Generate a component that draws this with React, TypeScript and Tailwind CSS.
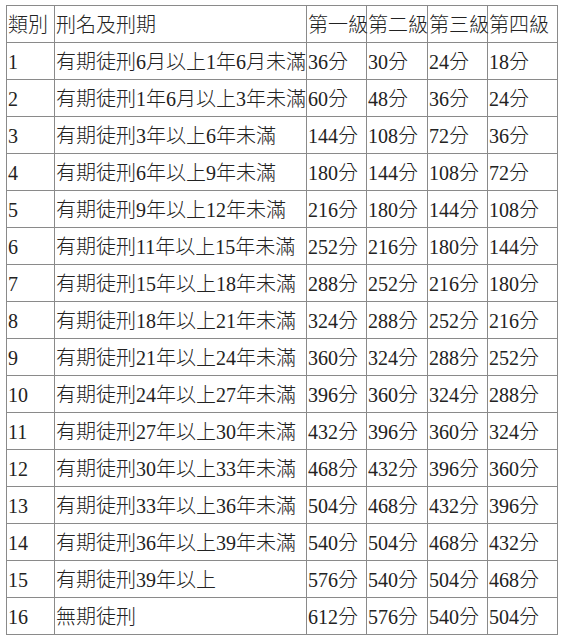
import React from "react";

const rows: string[][] = [
  ["類別", "刑名及刑期", "第一級", "第二級", "第三級", "第四級"],
  ["1", "有期徒刑6月以上1年6月未滿", "36分", "30分", "24分", "18分"],
  ["2", "有期徒刑1年6月以上3年未滿", "60分", "48分", "36分", "24分"],
  ["3", "有期徒刑3年以上6年未滿", "144分", "108分", "72分", "36分"],
  ["4", "有期徒刑6年以上9年未滿", "180分", "144分", "108分", "72分"],
  ["5", "有期徒刑9年以上12年未滿", "216分", "180分", "144分", "108分"],
  ["6", "有期徒刑11年以上15年未滿", "252分", "216分", "180分", "144分"],
  ["7", "有期徒刑15年以上18年未滿", "288分", "252分", "216分", "180分"],
  ["8", "有期徒刑18年以上21年未滿", "324分", "288分", "252分", "216分"],
  ["9", "有期徒刑21年以上24年未滿", "360分", "324分", "288分", "252分"],
  ["10", "有期徒刑24年以上27年未滿", "396分", "360分", "324分", "288分"],
  ["11", "有期徒刑27年以上30年未滿", "432分", "396分", "360分", "324分"],
  ["12", "有期徒刑30年以上33年未滿", "468分", "432分", "396分", "360分"],
  ["13", "有期徒刑33年以上36年未滿", "504分", "468分", "432分", "396分"],
  ["14", "有期徒刑36年以上39年未滿", "540分", "504分", "468分", "432分"],
  ["15", "有期徒刑39年以上", "576分", "540分", "504分", "468分"],
  ["16", "無期徒刑", "612分", "576分", "540分", "504分"],
];

export default function App() {
  return (
    <div className="min-h-screen bg-white pt-[5px] pl-[6px]">
      <div
        className="grid w-max grid-cols-[48px_252px_60px_61px_60px_70px] border-l border-t border-[#8a8a8a] text-[20px] font-light text-[#222222]"
        style={{ fontFamily: '"Liberation Serif", "Noto Sans CJK TC", serif' }}
      >
        {rows.map((r, i) =>
          r.map((c, j) => (
            <div
              key={`${i}-${j}`}
              className="flex h-[37px] items-center whitespace-nowrap border-b border-r border-[#8a8a8a] pl-[1px] pt-[2px] leading-none"
            >
              {c}
            </div>
          ))
        )}
      </div>
    </div>
  );
}
